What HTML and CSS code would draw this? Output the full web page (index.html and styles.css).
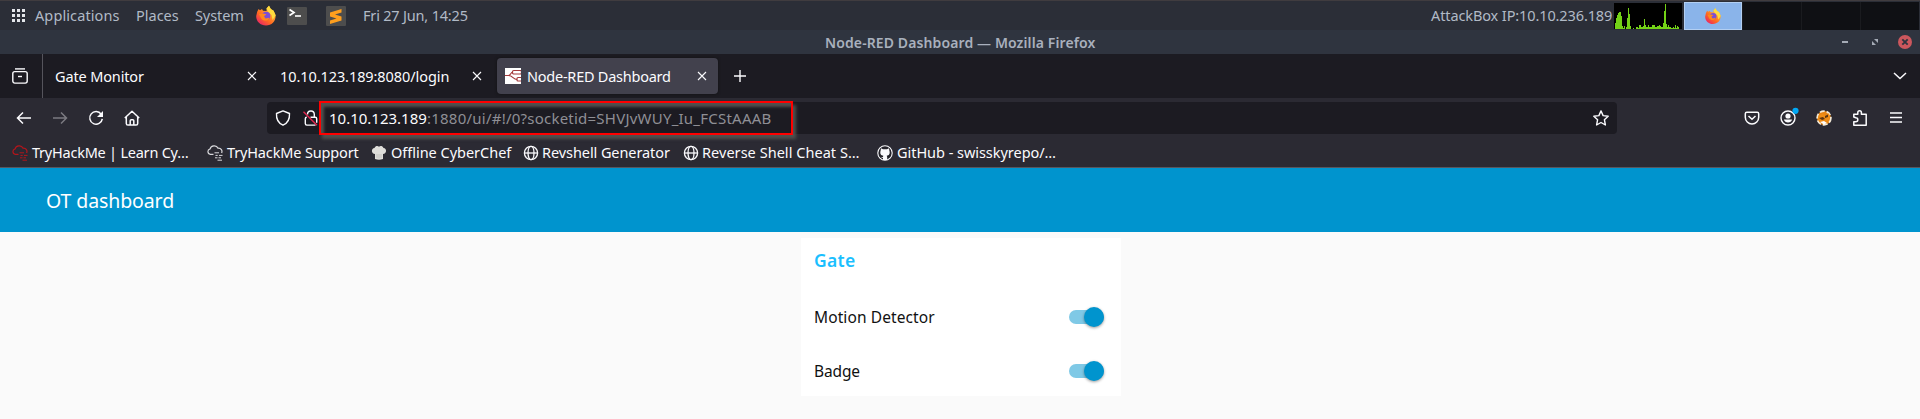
FILE: index.html
```html
<!DOCTYPE html>
<html lang="en">
<head>
<meta charset="utf-8">
<title>Node-RED Dashboard</title>
<link rel="stylesheet" href="styles.css">
</head>
<body>
<svg class="defs" width="0" height="0">
  <defs>
    <linearGradient id="fire" x1="1" y1="0" x2="0.2" y2="1"><stop offset="0" stop-color="#fff44f"/><stop offset=".35" stop-color="#ffa436"/><stop offset=".65" stop-color="#ff6a1f"/><stop offset="1" stop-color="#e8206a"/></linearGradient>
    <symbol id="firefox" viewBox="0 0 20 20">
      <path d="M1.2 6.2 2.6 3.4 4 4.8 6 3.5 7 5.2 10.6 5.4 10.5 3 13 .2 14.8 3.4 17.6 5.2 19.6 9.5C20 16 15.500 20 10 20S0 16 .2 10.500z" fill="url(#fire)"/>
      <path d="M10.500 3 13 .2l1.800 3.200 2.800 1.800 2 4.800-3 4.500-1-5-3-2.500z" fill="#ffdc3d"/>
      <circle cx="10.200" cy="10.400" r="4.100" fill="#7b4fd6"/>
      <path d="M3 8.500 7 8l3.500.8-2.500 2L9.500 13l4-.8C12 16 7 16 5 12.500z" fill="#ff8a1c"/>
    </symbol>
    <symbol id="close" viewBox="0 0 10 10"><path d="M1 1l8 8M9 1 1 9" fill="none" stroke="#fbfbfe" stroke-width="1.100"/></symbol>
    <symbol id="globe" viewBox="0 0 16 16"><g fill="none" stroke="#fbfbfe" stroke-width="1.300"><circle cx="8" cy="8" r="6.600"/><ellipse cx="8" cy="8" rx="3" ry="6.600"/><path d="M1.500 8h13"/></g></symbol>
    <symbol id="cloud" viewBox="0 0 16 16"><g fill="none" stroke="currentColor" stroke-width="1.200"><path d="M6.500 9.300H3.300A2.700 2.700 0 0 1 3 4 C4 .2 9.500-.4 11 3.200c3.200-.2 4.700 2.300 3.600 4.800"/><path d="M7.500 7.800H12M8.500 10.400h2.200M12 10.400h3.500M8 12.800h2.500M11.500 12.800H14M10.500 15.200h4.500" stroke-width="1"/></g></symbol>
  </defs>
</svg>

<header class="panel">
  <svg class="grid-icon" viewBox="0 0 13 13"><path d="M0 1.500h13M0 6.500h13M0 11.500h13" stroke="#e4e6ea" stroke-width="3" stroke-dasharray="3 2"/></svg>
  <span class="t applications">Applications</span>
  <span class="t places">Places</span>
  <span class="t system">System</span>
  <svg class="ff"><use href="#firefox"/></svg>
  <svg class="terminal" viewBox="0 0 20 18"><rect width="20" height="18" rx="1" fill="#4d4d4d"/><path d="M2.500 2.500 7 5.500l-4.500 3" fill="none" stroke="#fff" stroke-width="1.700"/><path d="M8 9h6" stroke="#fff" stroke-width="1.600"/></svg>
  <svg class="sublime" viewBox="0 0 20 20"><rect width="20" height="20" rx="1" fill="#4d4d4d"/><path d="M4 6.500 15.500 3v3.500L9 8.600l6.500 2v4L4 18v-3.500l6.500-2L4 10.400z" fill="#ff9f1e"/></svg>
  <span class="t clock">Fri 27 Jun, 14:25</span>
  <span class="t ip">AttackBox IP:10.10.236.189</span>
  <svg class="graph" viewBox="0 0 68 26"><rect width="68" height="26" fill="#000"/><path d="M1 26v-6h1v-5h1v-3h1v-2h1V9h2v4h1v10h1v2h1v-2h1v3h1v-2h1V15h1V5h1v6h1v12h1v3h2v-1h1v1h2v-2h2v1h1v-3h2v2h2v-1h1v-7h1v6h1v2h2v-2h1v2h3v-2h3v2h2v-1h2v-1h1v1h1v1h2v-4h1V8h1V1h1v20h1v3h1v-2h1v2h2v1h2v-1h1v1h1v-3h1v3h1v-2h1v1h1v2z" fill="#73d216"/></svg>
  <div class="workspaces">
    <div class="ws active"><svg class="ff-small" viewBox="0 0 20 20"><use href="#firefox"/></svg></div>
    <div class="ws"></div><div class="ws"></div><div class="ws"></div>
  </div>
</header>

<div class="titlebar">
  <span class="t wtitle">Node-RED Dashboard — Mozilla Firefox</span>
  <svg class="wbuttons" viewBox="0 0 72 16"><path d="M2 8h6" stroke="#a5abb6" stroke-width="2"/><path d="M34 5h4v4zM32 7v4h4z" fill="#a5abb6"/><circle cx="65" cy="8" r="7" fill="#cc575d"/><path d="m62.300 5.300 5.400 5.400m0-5.400-5.400 5.400" stroke="#2f343f" stroke-width="1.900"/></svg>
</div>

<nav class="tabs">
  <div class="view"><svg width="16" height="16" viewBox="0 0 16 16" fill="none" stroke="#fbfbfe" stroke-width="1.400"><path d="M3 .9h10"/><rect x=".8" y="3.600" width="14.400" height="11.500" rx="2"/><path d="M6 8.500h4"/></svg></div>
  <div class="tab tab-a"><span class="t gm">Gate Monitor</span><svg class="x"><use href="#close"/></svg></div>
  <div class="tab tab-b"><span class="t login">10.10.123.189:8080/login</span><svg class="x"><use href="#close"/></svg></div>
  <div class="tab tab-c"><svg class="nr" viewBox="0 0 16 16"><rect width="16" height="16" fill="#fff"/><g fill="none" stroke="#a53a3c" stroke-width="1.200"><path d="M0 7.500h3.500C6 7.500 5.500 4 8 4M3.500 7.500C8 7.500 8 11.500 12 11.500"/><rect x="7.500" y="2.500" width="9" height="3.500" rx="1.200"/><rect x="12" y="9.500" width="6" height="3.500" rx="1"/></g></svg><span class="t nrd">Node-RED Dashboard</span><svg class="x"><use href="#close"/></svg></div>
  <svg class="plus" viewBox="0 0 12 12"><path d="M6 0v12M0 6h12" stroke="#fbfbfe" stroke-width="1.400"/></svg>
  <svg class="chev" viewBox="0 0 14 8"><path d="m1 1 6 5.500L13 1" fill="none" stroke="#fbfbfe" stroke-width="1.500"/></svg>
</nav>

<div class="toolbar">
  <svg class="i back" viewBox="0 0 16 16" fill="none" stroke="#fbfbfe" stroke-width="1.500"><path d="M15 8H1.500M7 2.500 1.500 8 7 13.500"/></svg>
  <svg class="i fwd" viewBox="0 0 16 16" fill="none" stroke="#7b7a81" stroke-width="1.500"><path d="M1 8h13.500M9 2.500 14.500 8 9 13.500"/></svg>
  <svg class="i reload" viewBox="0 0 16 16"><path d="M13.200 4.200A6.300 6.300 0 1 0 14.300 8.800" fill="none" stroke="#fbfbfe" stroke-width="1.500"/><path d="M15 1v6H9z" fill="#fbfbfe"/></svg>
  <svg class="i home" viewBox="0 0 16 16" fill="none" stroke="#fbfbfe" stroke-width="1.500" stroke-linejoin="round"><path d="M.8 8 8 1.200 15.200 8M2.300 7v6.500q0 1.600 1.600 1.600h8.200q1.600 0 1.600-1.600V7M6.200 15v-4.300q0-1 1-1h1.600q1 0 1 1V15"/></svg>
  <div class="urlbar">
    <svg class="i shield" viewBox="0 0 16 16" fill="none" stroke="#fbfbfe" stroke-width="1.400" stroke-linejoin="round"><path d="M8 .9 14.500 3.500C14.800 9 12.500 13.300 8 15.200 3.500 13.300 1.200 9 1.500 3.500z"/></svg>
    <svg class="i lock" viewBox="0 0 16 16" fill="none" stroke="#fbfbfe" stroke-width="1.400"><path d="M4.500 4.500a3.400 3.400 0 0 1 6.800-.3V7"/><path d="M7.500 7.300h4.700q1.500 0 1.500 1.500v4M12.500 15.100H3.800q-1.500 0-1.500-1.500V8.800q0-1.500 1.500-1.500"/><path d="m.5 1.800 13.500 13.500" stroke="#e22850"/></svg>
    <div class="mark"><span class="t host">10.10.123.189</span><span class="t path">:1880/ui/#!/0?socketid=SHVJvWUY_Iu_FCStAAAB</span></div>
    <svg class="i star" viewBox="0 0 16 16" fill="none" stroke="#fbfbfe" stroke-width="1.400" stroke-linejoin="round"><path d="m8 .9 2.100 4.700 5.100.6-3.800 3.500 1 5.300L8 12.500 3.600 15l1-5.300L.8 6.200l5.100-.6z"/></svg>
  </div>
  <div class="actions">
    <svg class="i" viewBox="0 0 16 16" fill="none" stroke="#fbfbfe" stroke-width="1.500"><path d="M2.800 2.300h10.400q1.500 0 1.500 1.500v3.400a6.700 6.700 0 0 1-13.400 0V3.800q0-1.500 1.500-1.500zM4.500 6 8 9.200 11.500 6"/></svg>
    <svg class="i acct" viewBox="0 0 16 16"><circle cx="8" cy="8" r="7" fill="none" stroke="#fbfbfe" stroke-width="1.400"/><circle cx="8" cy="6" r="2.600" fill="#fbfbfe"/><path d="M3.800 9.500h8.400A4.500 4.500 0 0 1 3.800 9.500z" fill="#fbfbfe"/><circle cx="15.500" cy=".8" r="3.100" fill="#00a8f5"/></svg>
    <svg class="i" viewBox="0 0 16 16"><circle cx="8" cy="8" r="7" fill="#e98512"/><circle cx="8" cy="8" r="6.900" fill="none" stroke="#f3ead8" stroke-width="1.700" stroke-dasharray="5 2"/><path d="m3 5 4-1 3 2 3-3 1 5-3 3-4-1-3 2-2-3z" fill="#ef8d16"/><path d="m3 8 4-1 2 2-3 1zM9 6l3-1.500V7L9 8z" fill="#5b3410"/><path d="m4 12 4-1 3 2-3 1.500z" fill="#fff"/></svg>
    <svg class="i" viewBox="0 0 16 16" fill="none" stroke="#fbfbfe" stroke-width="1.500" stroke-linejoin="round"><path d="M1.800 7V4.200h4V2.500a1.800 1.800 0 0 1 3.600 0v1.700h4.800v11H1.800v-3.500h2a2 2 0 0 0 0-4z"/></svg>
    <svg class="i" viewBox="0 0 16 16"><path d="M2 3h12M2 7.500h12M2 12h12" stroke="#fbfbfe" stroke-width="1.300"/></svg>
  </div>
</div>

<div class="bookmarks">
  <svg class="i thm"><use href="#cloud"/></svg><span class="t b1">TryHackMe | Learn Cy…</span>
  <svg class="i sup"><use href="#cloud"/></svg><span class="t b2">TryHackMe Support</span>
  <svg class="i chef" viewBox="0 0 16 16"><path d="M4 9C0 9 0 3 3.500 3 4.500.5 7 .8 8 1.700 9 .8 11.500.5 12.500 3 16 3 16 9 12 9V14q-4 1.500-8 0z" fill="#deddda"/><path d="M6 9v4M8 9v4.500M10 9v4" stroke="#bdbcb9" stroke-width=".8"/></svg><span class="t b3">Offline CyberChef</span>
  <svg class="i g1"><use href="#globe"/></svg><span class="t b4">Revshell Generator</span>
  <svg class="i g2"><use href="#globe"/></svg><span class="t b5">Reverse Shell Cheat S…</span>
  <svg class="i gh" viewBox="0 0 16 16"><circle cx="8" cy="8" r="7.200" fill="#24232a" stroke="#fbfbfe" stroke-width="1.100"/><path d="M4 3.200 6 4.300h4l2-1.100.4 2.600C13.300 9 12 10.500 9.700 10.800l.5 1.300v3H6v-2l-2.200-.8L6 12l.3-1.200C4 10.500 2.700 9 3.600 5.800z" fill="#fbfbfe"/></svg><span class="t b6">GitHub - swisskyrepo/…</span>
</div>

<main class="dash">
  <div class="dash-bar"><h1 class="t ot">OT dashboard</h1></div>
  <section class="card">
    <h2 class="t gate">Gate</h2>
    <div class="row"><span class="t motion">Motion Detector</span><span class="switch"><i class="thumb"></i></span></div>
    <div class="row"><span class="t badge">Badge</span><span class="switch"><i class="thumb"></i></span></div>
  </section>
</main>
</body>
</html>
```
FILE: styles.css
```css
* { box-sizing: border-box; }
body { margin: 0; width: 1920px; height: 419px; overflow: hidden; background: #fafafa; font-family: "Noto Sans", sans-serif; font-size: 14.5px; }
.defs { position: absolute; }
svg { display: block; flex: none; }
.t { display: block; flex: none; white-space: nowrap; margin: 0; font-weight: 400; }
.i { width: 16px; height: 16px; overflow: visible; }

.panel { height: 30px; background: #2b2e37; border-top: 1px solid #403c3f; display: flex; align-items: center; color: #b1bac6; }
.panel .t { height: 29px; line-height: 28px; }
.grid-icon { width: 13px; height: 13px; margin-left: 12px; }
.applications { width: 84px; margin-left: 10px; letter-spacing: .1px; }
.places { width: 42px; margin-left: 17px; }
.system { width: 48px; margin-left: 17px; letter-spacing: -.1px; }
.ff { width: 20px; height: 21px; margin-left: 13px; }
.terminal { width: 20px; height: 18px; margin-left: 11px; }
.sublime { width: 20px; height: 20px; margin-left: 19px; }
.clock { width: 104px; margin-left: 17px; letter-spacing: -.19px; }
.ip { width: 181px; margin-left: 964px; letter-spacing: -.11px; }
.graph { width: 68px; height: 26px; margin-left: 2px; }
.workspaces { display: flex; margin-left: 2px; gap: 1px; height: 28px; background: #1a1b1f; }
.ws { width: 58px; height: 28px; background: #0f1014; }
.ws.active { background: #8ab4ea; border: 1px solid #b3cff2; display: flex; align-items: center; justify-content: center; }
.ff-small { width: 16px; height: 16px; }

.titlebar { height: 24px; background: #2f343f; display: flex; align-items: flex-start; color: #a9b0bd; line-height: 25px; }
.wtitle { width: 270px; margin-left: 825px; font-weight: 600; font-size: 14px; letter-spacing: .11px; }
.wbuttons { width: 72px; height: 16px; margin: 4px 0 0 745px; }

.tabs { height: 44px; background: #1c1b22; display: flex; align-items: center; color: #fbfbfe; }
.view { width: 43px; height: 44px; border-right: 1px solid #55545c; display: flex; align-items: center; padding-left: 12px; }
.tab { height: 36px; display: flex; align-items: center; border-radius: 4px; line-height: 34px; }
.x { width: 10px; height: 10px; }
.tab-a { margin-left: 12px; width: 202px; justify-content: space-between; }
.tab-b { margin-left: 23px; width: 202px; justify-content: space-between; }
.tab-c { margin-left: 15px; width: 221px; background: #42414d; box-shadow: 0 0 3px #111; padding-left: 8px; }
.gm { letter-spacing: -.14px; }
.login { letter-spacing: -.08px; }
.nr { width: 16px; height: 16px; }
.nrd { margin-left: 6px; width: 143px; letter-spacing: -.24px; }
.tab-c .x { margin-left: 27px; }
.plus { width: 12px; height: 12px; margin-left: 16px; }
.chev { width: 14px; height: 8px; margin-left: 1147px; }

.toolbar { height: 40px; background: #2b2a33; display: flex; align-items: center; }
.back { margin-left: 16px; }
.fwd, .reload, .home { margin-left: 20px; }
.urlbar { margin-left: 127px; width: 1350px; height: 32px; background: #1c1b22; border-radius: 4px; display: flex; align-items: center; }
.shield { margin-left: 8px; }
.lock { margin-left: 12px; }
.mark { width: 474px; height: 34px; border: 2px solid #f00; box-shadow: 3px 4px 3px #50504e, inset 3px 4px 3px #50504e; display: flex; align-items: center; padding-left: 8px; line-height: 30px; font-size: 15px; }
.host { width: 98px; color: #fbfbfe; }
.path { color: #8f8f95; letter-spacing: .23px; }
.star { margin-left: 800px; }
.actions { display: flex; gap: 20px; margin-left: 127px; }

.bookmarks { height: 30px; background: #2b2a33; border-bottom: 1px solid #58575f; display: flex; align-items: center; color: #fbfbfe; }
.bookmarks .t { height: 29px; line-height: 28px; }
.thm { margin-left: 12px; color: #b3151c; }
.sup { margin-left: 19px; color: #d8d8dc; }
.chef { margin-left: 13px; }
.g1 { margin-left: 12px; }
.g2 { margin-left: 13px; }
.gh { margin-left: 18px; }
.b1 { width: 156px; margin-left: 4px; letter-spacing: -.23px; }
.b2 { width: 131px; margin-left: 4px; letter-spacing: -.15px; }
.b3 { width: 120px; margin-left: 4px; letter-spacing: -.02px; }
.b4 { width: 128px; margin-left: 3px; letter-spacing: -.08px; }
.b5 { width: 157px; margin-left: 3px; letter-spacing: .04px; }
.b6 { margin-left: 4px; letter-spacing: -.04px; }

.dash { display: flex; flex-direction: column; }
.dash-bar { height: 64px; background: #0094ce; color: #fff; padding-left: 46px; }
.ot { font-size: 19.5px; line-height: 66px; letter-spacing: -.1px; }
.card { margin: 6px 0 0 801px; width: 320px; height: 158px; background: #fff; padding-left: 13px; color: #111; }
.gate { height: 52px; font-size: 17.5px; font-weight: 600; color: #1bbfff; line-height: 44px; letter-spacing: .3px; }
.row { height: 54px; display: flex; align-items: center; justify-content: space-between; padding-right: 17px; font-size: 15.5px; }
.motion { letter-spacing: .1px; }
.badge { letter-spacing: -.12px; }
.switch { width: 35px; height: 14px; border-radius: 7px; background: #7fc9e6; display: flex; align-items: center; justify-content: flex-end; }
.thumb { width: 20px; height: 20px; border-radius: 50%; background: #0094ce; box-shadow: 0 1px 3px rgba(0,0,0,.4); flex: none; }
```
